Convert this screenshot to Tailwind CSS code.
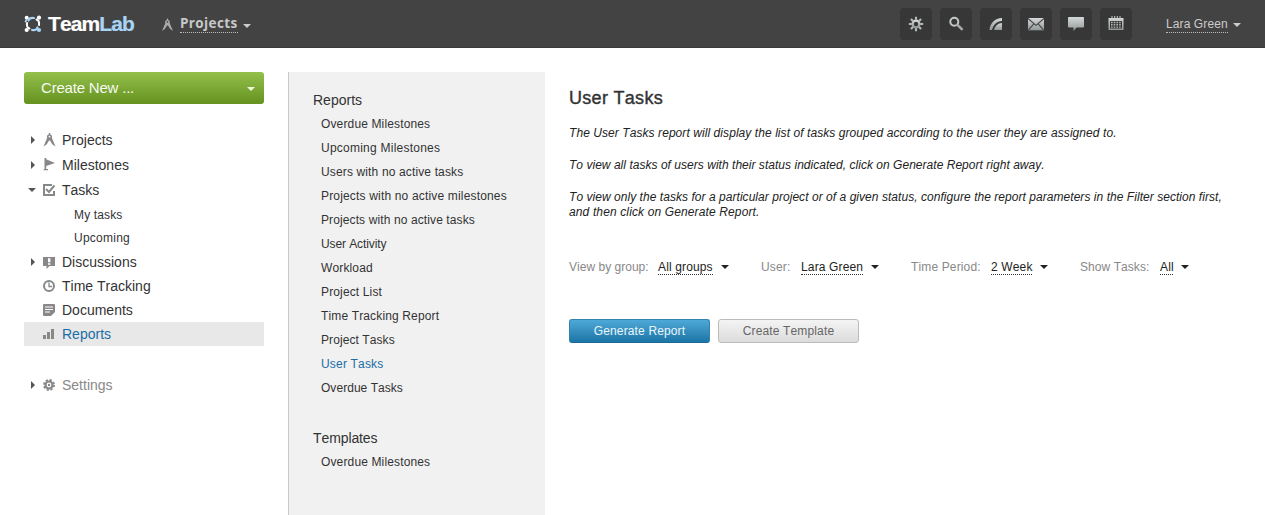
<!DOCTYPE html>
<html lang="en">
<head>
<meta charset="utf-8">
<title>TeamLab - User Tasks</title>
<script src="https://cdn.jsdelivr.net/npm/@tailwindcss/browser@4"></script>
</head>
<body class="h-[515px] overflow-hidden bg-white font-['Liberation_Sans',Arial,sans-serif] text-xs text-[#333] [font-kerning:none]">
<svg width="0" height="0" class="absolute">
  <defs>
    <linearGradient id="g" x1="0" y1="0" x2="0" y2="1"><stop offset="0" stop-color="#d4d8d8"/><stop offset="1" stop-color="#929797"/></linearGradient>
    <symbol id="compass" viewBox="0 0 12 14"><path fill-rule="evenodd" d="M5.300 0h1.400v1.500c1.200.2 1.900 1.100 1.900 2.100 0 .5-.1.900-.3 1.200L12 13.600 8.700 11.200 6.500 7.500h-1L3.300 11.200 0 13.600 3.700 4.800c-.2-.3-.3-.7-.3-1.200 0-1 .7-1.900 1.900-2.100zM6 2.700a.9.9 0 1 0 0 1.800.9.9 0 0 0 0-1.800z"/></symbol>
  </defs>
</svg>

<header class="flex h-12 items-center border-b border-[#393939] bg-[#434343] pl-6">
  <svg class="mt-px" width="18" height="18" viewBox="0 0 18 18" fill="none" stroke-linecap="round">
    <path d="M4.500 5.500Q5.500 2.300 10 3" stroke="#a9d5f5" stroke-width="2.200"/><path d="M12.500 4.500Q15.700 5.500 15 10" stroke="#fff" stroke-width="2"/><path d="M13.500 12.500Q12.500 15.700 8 15" stroke="#a9d5f5" stroke-width="2.200"/><path d="M5.500 13.500Q2.300 12.500 3 8" stroke="#fff" stroke-width="2"/>
    <circle cx="2.700" cy="2.700" r="2" fill="#fff"/><circle cx="15" cy="2.700" r="2.100" fill="#fff"/><circle cx="2.700" cy="15" r="2.100" fill="#fff"/><circle cx="15" cy="15" r="2.100" fill="#a9d5f5"/><path d="M1.500 6.500l1-1.500" stroke="#a9d5f5" stroke-width="1.800"/>
  </svg>
  <div class="ml-[6px] w-[87px] text-[21px] leading-6 font-bold tracking-[-0.9px] text-white [-webkit-text-stroke:0.2px_currentColor]">Team<span class="text-[#a9d5f5]">Lab</span></div>
  <svg class="ml-[27px] mt-[2px] fill-[#aaa]" width="11" height="14" preserveAspectRatio="none"><use href="#compass"/></svg>
  <div class="ml-[7px] mt-[2px] h-[17px] w-[58px] border-b border-dotted border-[#bbb] font-['Open_Sans','DejaVu_Sans',sans-serif] text-[13.5px] leading-[15px] font-bold tracking-[0.38px] text-[#c8c8c8]">Projects</div>
  <svg class="ml-[5px] mt-1 fill-[#ccc]" width="8" height="4"><path d="M0 0h8L4 4z"/></svg>
  <div class="ml-auto flex gap-2">
    <div class="grid h-8 w-8 place-items-center rounded-sm bg-[#373737]"><svg width="16" height="16" viewBox="0 0 16 16"><g stroke="url(#g)" fill="none"><circle cx="8" cy="8" r="3.400" stroke-width="2.400"/></g><g stroke="#b4b8b8" stroke-width="2.100"><path d="M8 .8v3M8 12.200v3M.8 8h3M12.200 8h3M2.900 2.900l2.100 2.100M11 11l2.100 2.100M2.900 13.100 5 11M11 5l2.100-2.100"/></g></svg></div>
    <div class="grid h-8 w-8 place-items-center rounded-sm bg-[#373737]"><svg width="16" height="16" viewBox="0 0 16 16" fill="none"><circle cx="6.300" cy="5.700" r="4" stroke="#c4c8c8" stroke-width="2"/><path d="m9.500 8.900 4.300 4.300" stroke="#a6aaaa" stroke-width="2.600" stroke-linecap="round"/></svg></div>
    <div class="grid h-8 w-8 place-items-center rounded-sm bg-[#373737]"><svg width="16" height="16" viewBox="0 0 16 16" fill="url(#g)"><path d="M14 2v3C9 5 5.500 8.500 4 14H1.500C2 7 7 2 14 2z"/><path d="M14 7v7H6c1-4 4-7 8-7z"/></svg></div>
    <div class="grid h-8 w-8 place-items-center rounded-sm bg-[#373737]"><svg width="16" height="16" viewBox="0 0 16 16"><path fill="url(#g)" d="M0 2h16v12.300H0z"/><path d="m0 2.500 8 6.800 8-6.800M.5 13.800l5.300-6M15.500 13.800l-5.300-6" fill="none" stroke="#434343" stroke-width="1.100"/></svg></div>
    <div class="grid h-8 w-8 place-items-center rounded-sm bg-[#373737]"><svg width="16" height="16" viewBox="0 0 16 16"><path fill="url(#g)" d="M1 1h14q1 0 1 1v8.500q0 1-1 1H8.500L5.500 15v-3.500H1q-1 0-1-1V2q0-1 1-1z"/></svg></div>
    <div class="grid h-8 w-8 place-items-center rounded-sm bg-[#373737]"><svg width="16" height="16" viewBox="0 0 16 16"><path fill="url(#g)" fill-rule="evenodd" d="M.5 2h15v12H.5zM2 5v7.500h12V5z"/><path d="M4 0v3.500M6.700 0v3.500M9.300 0v3.500M12 0v3.500" stroke="#ccc"/><path d="M3 6.500h10.500M3 8.800h10.500M3 11.100h10.500" stroke="#b4b8b8" stroke-width="1.400" stroke-dasharray="1.600 1.100"/></svg></div>
  </div>
  <div class="ml-[34px] mt-[2px] h-4 w-[62px] whitespace-nowrap border-b border-dotted border-[#bbb] leading-[14px] tracking-[0.1px] text-[#ccc]">Lara Green</div>
  <svg class="ml-[5px] mr-6 mt-[2px] fill-[#ccc]" width="8" height="4"><path d="M0 0h8L4 4z"/></svg>
</header>

<div class="flex h-[467px] pt-6">
  <aside class="ml-6 w-60 text-sm">
    <div class="flex h-8 items-center rounded-[3px] bg-linear-to-b from-[#93bf4a] to-[#66921f] pr-[9px] pl-[17px] text-[15px] tracking-[-0.2px] text-[#f6faee]">Create New ...
      <svg class="ml-auto mt-[2px] fill-[#eef5df]" width="8" height="4"><path d="M0 0h8L4 4z"/></svg>
    </div>
    <nav class="pt-[23px]">
      <div class="flex h-[25px] items-center pl-[7px]"><svg class="mr-[9px] fill-[#555]" width="4" height="8"><path d="M0 0v8l4-4z"/></svg><svg class="mr-[6px] ml-[-1px] fill-[#888]" width="13" height="14"><use href="#compass"/></svg>Projects</div>
      <div class="flex h-[25px] items-center pl-[7px]"><svg class="mr-[9px] fill-[#555]" width="4" height="8"><path d="M0 0v8l4-4z"/></svg><svg class="mr-[6px] ml-[-1px] fill-[#888]" width="13" height="13"><path d="M1.500 0h1.700v1.300L12 5 3.200 8v3H5v1.300H0L1.500 11z"/></svg>Milestones</div>
      <div class="mb-px flex h-[25px] items-center pl-1"><svg class="mr-[7px] fill-[#555]" width="8" height="4"><path d="M0 0h8L4 4z"/></svg><svg class="mr-[7px] fill-none stroke-[#888]" width="12" height="12"><path d="M9 1H1v10h10V7" stroke-width="2"/><path d="m3 5 3 3 5.500-6.500" stroke-width="2"/></svg>Tasks</div>
      <div class="flex h-[23px] items-center pl-[50px] text-xs tracking-[0.14px]">My tasks</div>
      <div class="mb-px flex h-[23px] items-center pl-[50px] text-xs tracking-[0.25px]">Upcoming</div>
      <div class="flex h-6 items-center pl-[7px]"><svg class="mr-[8px] fill-[#555]" width="4" height="8"><path d="M0 0v8l4-4z"/></svg><svg class="mr-[7px] mt-px" width="12" height="12"><path d="M0 0h12v9H6.500L3.500 12V9H0z" fill="#888"/><path d="M5 1.200h2.400v4H5zM5 6.200h2.400v1.600H5z" fill="#fff"/></svg>Discussions</div>
      <div class="flex h-6 items-center pl-[19px]"><svg class="mr-[7px] fill-none stroke-[#888]" width="12" height="12"><circle cx="6" cy="6" r="5" stroke-width="2"/><path d="M6 2.500v4h3" stroke-width="1.300"/></svg>Time Tracking</div>
      <div class="flex h-6 items-center pl-[19px]"><svg class="mr-[7px]" width="12" height="12"><path d="M1 0h10q1 0 1 1v7l-4 4H1q-1 0-1-1V1q0-1 1-1z" fill="#888"/><path d="M2 3h8M2 5.500h8M2 8h5" stroke="#fff" stroke-width="1.100"/></svg>Documents</div>
      <div class="flex h-6 items-center bg-[#e8e8e8] pl-[19px] text-[#1a6da5]"><svg class="mr-[8px] fill-[#888]" width="11" height="10"><path d="M0 6h3v4H0zM4 3h3v7H4zM8 0h3v10H8z"/></svg>Reports</div>
      <div class="mt-[27px] flex h-6 items-center pl-[7px] text-[#888]"><svg class="mr-[8px] fill-[#555]" width="4" height="8"><path d="M0 0v8l4-4z"/></svg><svg class="mr-[7px] fill-none stroke-[#888]" width="12" height="12"><circle cx="6" cy="6" r="3.500" stroke-width="2.200"/><circle cx="6" cy="6" r="5" stroke-width="2" stroke-dasharray="2.200 1.727"/><circle cx="6" cy="6" r="1.200" class="fill-[#888] stroke-none"/></svg>Settings</div>
    </nav>
  </aside>

  <section class="ml-6 w-[257px] border-l border-[#c8c8c8] bg-[#f1f1f1] pt-4 pl-6">
    <h2 class="h-6 text-sm leading-6">Reports</h2>
    <ul class="pl-2 leading-6 tracking-[0.14px]">
      <li>Overdue Milestones</li><li class="tracking-[0.24px]">Upcoming Milestones</li><li>Users with no active tasks</li><li class="tracking-[0.17px]">Projects with no active milestones</li><li class="tracking-[0.11px]">Projects with no active tasks</li><li class="tracking-[-0.1px]">User Activity</li><li>Workload</li><li>Project List</li><li>Time Tracking Report</li><li class="tracking-[0.08px]">Project Tasks</li><li class="tracking-[0.18px] text-[#1a6da5]">User Tasks</li><li class="tracking-[0.04px]">Overdue Tasks</li>
    </ul>
    <h2 class="mt-[26px] h-6 text-sm leading-6 tracking-[-0.1px]">Templates</h2>
    <ul class="pl-2 leading-6 tracking-[0.14px]"><li>Overdue Milestones</li></ul>
  </section>

  <main class="ml-6 pt-[14px]">
    <h1 class="h-6 text-[18px] leading-6 tracking-[0.3px] [-webkit-text-stroke:0.4px_currentColor]">User Tasks</h1>
    <div class="mt-4 leading-[15px] whitespace-nowrap italic text-[#222]">
      <p class="tracking-[0.07px]">The User Tasks report will display the list of tasks grouped according to the user they are assigned to.</p>
      <p class="mt-[17px] tracking-[0.03px]">To view all tasks of users with their status indicated, click on Generate Report right away.</p>
      <p class="mt-[17px] tracking-[0.045px]">To view only the tasks for a particular project or of a given status, configure the report parameters in the Filter section first,<br><span class="tracking-[0.13px]">and then click on Generate Report.</span></p>
    </div>
    <div class="mt-10 flex h-4 items-start leading-[14px] tracking-[0.14px] whitespace-nowrap text-[#888]">
      <span class="w-[89px] tracking-[0.02px]">View by group:</span><span class="h-[15px] w-[55px] border-b border-dotted border-[#333] text-[#222]">All groups</span><svg class="mt-[5px] ml-2 fill-[#222]" width="8" height="4"><path d="M0 0h8L4 4z"/></svg>
      <span class="ml-8 w-10">User:</span><span class="h-[15px] w-[62px] border-b border-dotted border-[#333] text-[#222]">Lara Green</span><svg class="mt-[5px] ml-2 fill-[#222]" width="8" height="4"><path d="M0 0h8L4 4z"/></svg>
      <span class="ml-8 w-20">Time Period:</span><span class="h-[15px] w-[41px] border-b border-dotted border-[#333] text-[#222]">2 Week</span><svg class="mt-[5px] ml-2 fill-[#222]" width="8" height="4"><path d="M0 0h8L4 4z"/></svg>
      <span class="ml-8 w-20 tracking-[0.06px]">Show Tasks:</span><span class="h-[15px] w-[13px] border-b border-dotted border-[#333] text-[#222]">All</span><svg class="mt-[5px] ml-2 fill-[#222]" width="8" height="4"><path d="M0 0h8L4 4z"/></svg>
    </div>
    <div class="mt-[43px] flex gap-2 tracking-[0.14px]">
      <button class="h-6 w-[141px] rounded-[3px] border border-[#3384ad] border-b-[#1c6a96] bg-linear-to-b from-[#4ea9d8] to-[#1b75a6] pb-px text-[#eaf6fc]">Generate Report</button>
      <button class="h-6 w-[141px] rounded-[3px] border border-[#bbb] bg-linear-to-b from-[#f4f4f4] to-[#dcdcdc] pb-px text-[#666]">Create Template</button>
    </div>
  </main>
</div>
</body>
</html>
